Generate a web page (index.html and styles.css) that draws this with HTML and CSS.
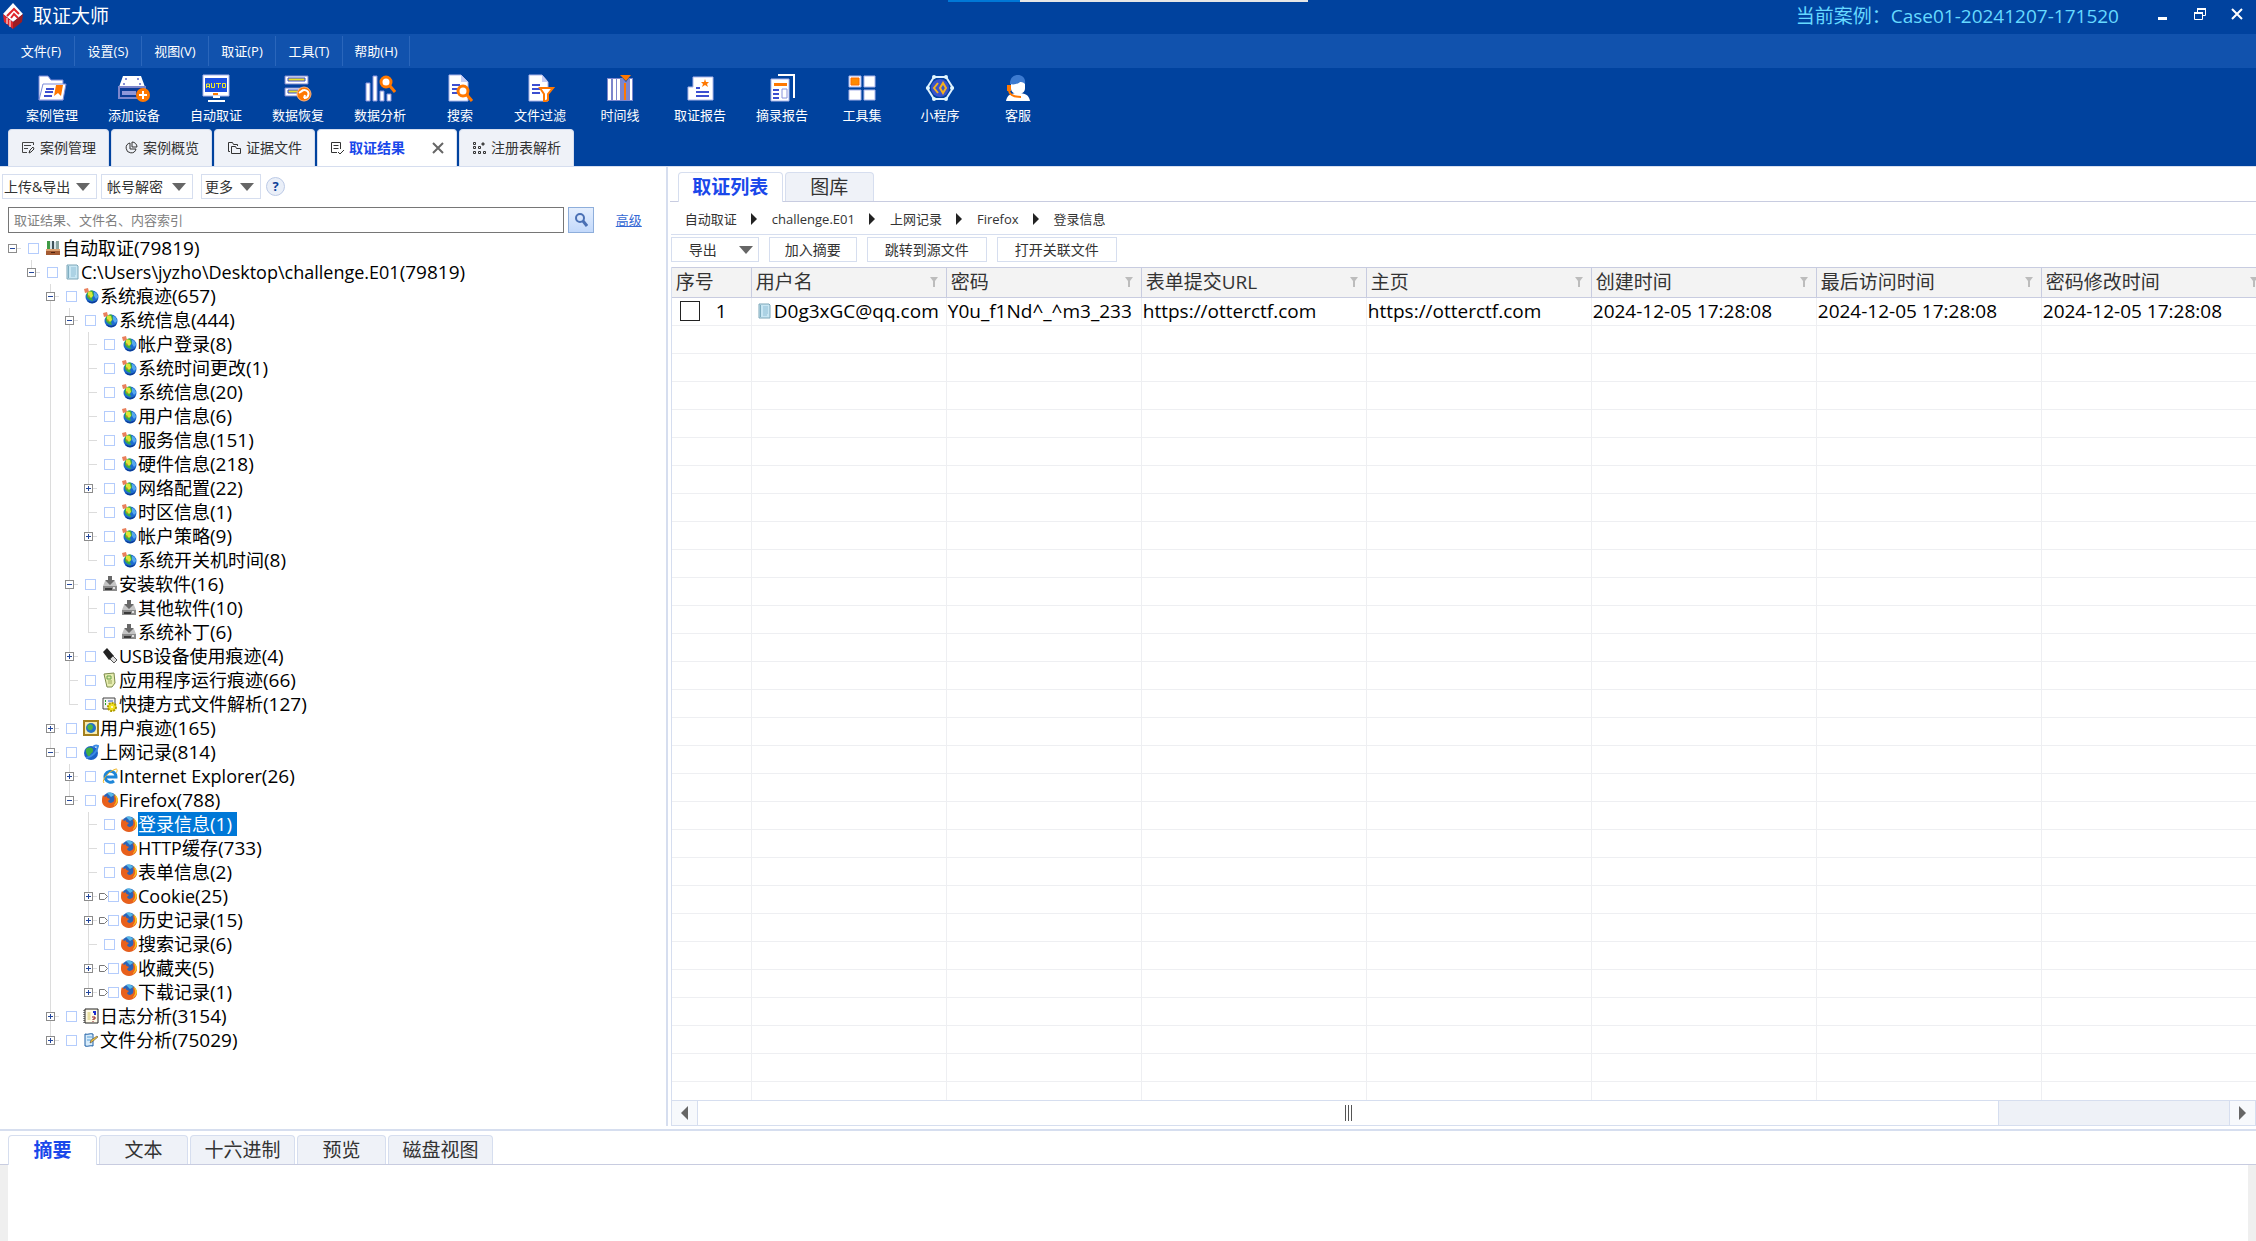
FILE: index.html
```html
<!DOCTYPE html>
<html lang="zh-CN">
<head>
<meta charset="utf-8">
<title>取证大师</title>
<link rel="stylesheet" href="styles.css">
</head>
<body>
<svg class="sprite" aria-hidden="true">
  <symbol id="i-logo" viewBox="0 0 20 26"><path d="M10 0l10 11-10 8L0 11z" fill="#fff"/><path d="M0 11l10 8v7L1 19z" fill="#e0262b"/><path d="M20 11l-10 8v7l9-7z" fill="#9d1c22"/><path d="M4 13l7-7 5 5M8 15l3-4 4 4" fill="none" stroke="#e0262b" stroke-width="2"/><path d="M4 15v6M7 17v7" stroke="#fff"/></symbol>
  <symbol id="t-case" viewBox="0 0 28 28"><path d="M1 2h9l3 4h12v20H1z" fill="#fff" stroke="#7a8ad8"/><path d="M5 10h23l-3 16H1z" fill="#fff" stroke="#7a8ad8"/><path d="M8 15h8M7 18h8M6 22h8" stroke="#3c4fd0" stroke-width="2"/><path d="M18 11h7l-2 11-3-3-4 3z" fill="#ff7800"/></symbol>
  <symbol id="t-add" viewBox="0 0 32 28"><path d="M5 2h18l4 11H1z" fill="#fff"/><path d="M1 13h26v11H1z" fill="#0d3c97" stroke="#7c86cc" stroke-width="2"/><path d="M4 17h14v4H4z" fill="#8f97da"/><g fill="#5c68c8"><circle cx="8" cy="5" r="1"/><circle cx="20" cy="5" r="1"/><circle cx="6" cy="10" r="1"/><circle cx="22" cy="10" r="1"/></g><circle cx="25" cy="21" r="7" fill="#ff7800"/><path d="M25 17v8M21 21h8" stroke="#fff" stroke-width="2"/></symbol>
  <symbol id="t-auto" viewBox="0 0 28 28"><path d="M1 1h26v21H1z" fill="#fff" stroke="#a9b4ea"/><path d="M3 4h22v14H3z" fill="#1c50e0"/><path d="M4.500 14v-4h3v4M5 12.500h3M9.500 9v4.500h3V9M14 9.500h5M16.500 10v4M20.500 9.500h3v4h-3z" fill="none" stroke="#f2ea22"/><path d="M11 19h5v2h-5z" fill="#ff7800"/><path d="M11 23h7M6 27h17" stroke="#fff" stroke-width="2"/></symbol>
  <symbol id="t-recover" viewBox="0 0 28 28"><path d="M1 2h23v8H1zM1 14h23v8H1z" fill="#fff" stroke="#7c86cc"/><path d="M4 4h17v3H4zM4 16h10v3H4z" fill="#e9e02a" stroke="#3c4fd0"/><circle cx="20" cy="20" r="7" fill="#ff7800" stroke="#ffb37a"/><path d="M17 18a4 4 0 1 1 3 6M20 24l1-3M15 19l4-3" fill="none" stroke="#fff" stroke-width="2"/></symbol>
  <symbol id="t-analyse" viewBox="0 0 30 28"><path d="M1 9h4v18H1zM8 2h4v25H8zM15 17h4v10h-4zM22 20h4v7h-4z" fill="#fff" stroke="#8a94dc"/><circle cx="21" cy="8" r="5" fill="#fff" stroke="#ff7800" stroke-width="3"/><path d="M25 12l5 6" stroke="#ff7800" stroke-width="3"/></symbol>
  <symbol id="t-search" viewBox="0 0 26 28"><path d="M2 1h12l7 7v19H2z" fill="#fff" stroke="#a9b4ea"/><path d="M14 1v7h7z" fill="#c4ccf5"/><path d="M5 11h8M5 15h6M5 19h6" stroke="#3c4fd0" stroke-width="2"/><circle cx="16" cy="17" r="5" fill="#fff" stroke="#ff7800" stroke-width="3"/><path d="M20 21l5 6" stroke="#ff7800" stroke-width="3"/></symbol>
  <symbol id="t-filter" viewBox="0 0 28 28"><path d="M3 1h13l6 7v19H3z" fill="#fff" stroke="#a9b4ea"/><path d="M16 1v7h6z" fill="#c4ccf5"/><path d="M6 11h8M6 15h8M6 19h8" stroke="#3c4fd0" stroke-width="2"/><path d="M14 14h13l-5 6v6l-4 2v-8z" fill="#fff" stroke="#ff7800" stroke-width="2"/></symbol>
  <symbol id="t-time" viewBox="0 0 28 28"><path d="M1 4h26v23H1z" fill="#7c86cc"/><path d="M2 5h3v21H2zM7 5h3v21H7zM11 5h3v21h-3zM24 5h2v21h-2z" fill="#fff"/><path d="M13 0h13l-6 8z" fill="#00429e"/><path d="M14 1h11l-5 6z" fill="#ff7800"/><path d="M19 9v17" stroke="#ff7800" stroke-width="2"/></symbol>
  <symbol id="t-report" viewBox="0 0 28 28"><path d="M7 3h20v23H2V13h5z" fill="#fff" stroke="#a9b4ea"/><path d="M10 14h4M10 18h13M10 22h13" stroke="#3c4fd0" stroke-width="2"/><path d="M19 5l1 3h3l-2 2 1 3-3-2-3 2 1-3-2-2h3z" fill="#ff7800"/></symbol>
  <symbol id="t-excerpt" viewBox="0 0 28 28"><path d="M10 1h16v23" fill="none" stroke="#fff" stroke-width="2"/><path d="M3 5h18v22H3z" fill="#fff" stroke="#a9b4ea"/><path d="M6 9h13v3H6z" fill="#ff7800"/><path d="M5 16h6M5 20h6M5 24h6" stroke="#3c4fd0" stroke-width="2"/><path d="M14 15h5v9h-5z" fill="#fff" stroke="#8a94dc"/></symbol>
  <symbol id="t-tools" viewBox="0 0 28 28"><path d="M1 2h12v11H1zM16 2h11v11H16zM1 16h12v10H1zM16 16h11v10H16z" fill="#fff" stroke="#a9b4ea"/><path d="M3 4h8v7H3z" fill="#ff8a00" stroke="#ff6a00"/></symbol>
  <symbol id="t-mini" viewBox="0 0 28 28"><path d="M8 3h12l7 11-7 11H8L1 14z" fill="#00429e" stroke="#dff2ff" stroke-width="2"/><circle cx="14" cy="14" r="9" fill="#3a53cc"/><g fill="#dff6ff"><circle cx="8" cy="3" r="2"/><circle cx="20" cy="3" r="2"/><circle cx="26" cy="14" r="2"/><circle cx="20" cy="25" r="2"/><circle cx="8" cy="25" r="2"/><circle cx="2" cy="14" r="2"/></g><path d="M12 9l-4 5 4 5M17 9l-3 5 3 5 3-5z" fill="none" stroke="#f7b21a" stroke-width="2"/></symbol>
  <symbol id="t-service" viewBox="0 0 28 28"><path d="M2 27c1-6 5-8 12-8s11 2 12 8z" fill="#fff"/><path d="M7 8h14v6c0 4-3 6-7 6s-7-2-7-6z" fill="#fff"/><path d="M6 10C6 3 10 1 14 1s8 3 7 9c-2-2-4-2-5-2-2 2-6 3-10 2z" fill="#3c7ad0"/><path d="M3 11h4v6H3z" fill="#ff7800"/><path d="M5 17c1 4 5 6 12 6" fill="none" stroke="#ff7800" stroke-width="2"/></symbol>
  <symbol id="n-edit" viewBox="0 0 14 14"><path d="M12.500 4V1.500h-11v10H6M3 4.500h7M3 7.500h4" fill="none" stroke="#444"/><path d="M8 12l1-3 3-3 1 2-3 3z" fill="none" stroke="#333"/></symbol>
  <symbol id="n-pie" viewBox="0 0 14 14"><path d="M6 2a5 5 0 1 0 6 6H6z" fill="none" stroke="#333"/><path d="M8 1v5h5a5 5 0 0 0-5-5z" fill="none" stroke="#333"/></symbol>
  <symbol id="n-files" viewBox="0 0 14 14"><path d="M3 10.500H1.500v-9h4l1 2h4V5" fill="none" stroke="#333"/><path d="M4.500 12.500v-7h4l1 2h4v5z" fill="none" stroke="#333"/></symbol>
  <symbol id="n-result" viewBox="0 0 14 14"><path d="M10.500 8V1.500h-9v10H7M3.500 4.500h5M3.500 7.500h5M8 11l2 2 4-4" fill="none" stroke="#333"/></symbol>
  <symbol id="n-reg" viewBox="0 0 14 14"><path d="M1.500 1.500h2v2h-2zM1.500 5.500h2v2h-2zM6.500 5.500h2v2h-2zM1.500 10.500h2v2h-2zM6.500 10.500h2v2h-2zM11.500 10.500h2v2h-2z" fill="none" stroke="#333"/><path d="M11 1l2 2-2 2-2-2z" fill="#444"/></symbol>
  <symbol id="e-root" viewBox="0 0 16 16"><path d="M2 1h3v9H2z" fill="#3f9a46"/><path d="M5 1h2v9H5z" fill="#d7e4e9"/><path d="M7 1h2v9H7z" fill="#40525a"/><path d="M9 2h2v8H9z" fill="#d7e4e9"/><path d="M11 1h3v9h-3z" fill="#8aa4a0"/><path d="M1 9h14v6H1z" fill="#a35a32"/><path d="M1 9h14v2H1z" fill="#dba273"/><path d="M6 12h4v1H6z" fill="#4e220f"/></symbol>
  <symbol id="e-doc" viewBox="0 0 16 16"><path d="M3 1h10l1 1v13H3z" fill="#c8e6f3" stroke="#7da6b8"/><path d="M4 2h1v12H4z" fill="#80aec1"/><path d="M7 4h5M7 6h5M7 8h5M7 10h5M7 12h4" stroke="#6ba6c2" stroke-width=".6"/></symbol>
  <symbol id="e-sys" viewBox="0 0 16 16"><circle cx="9" cy="9" r="6.500" fill="#1e6cd0"/><path d="M4 5c1-2 4-3 6-2l1 4-2 3 1 3-3-1c-3-2-4-4-3-7z" fill="#3fb23c"/><path d="M11 4c2 0 4 3 4 5l-2 2-2-3z" fill="#57a8ee"/><path d="M5 3l4 1 1 4-2 2-3-3z" fill="#d8e838"/><path d="M1 1l4-1 1 4-4 1z" fill="#e9805c"/><path d="M5 7l2 1-1 2z" fill="#f08020"/><path d="M15 11a6 6 0 0 1-11 1c4 3 8 2 11-1z" fill="#0d3c94"/></symbol>
  <symbol id="e-inst" viewBox="0 0 16 16"><path d="M3 5h10l2 5H1z" fill="#c4c4c4"/><path d="M1 10h14v5H1z" fill="#8c8c8c"/><path d="M3 12h7v2H3z" fill="#3a3a3a"/><path d="M6 0h4v4h3L8 9 3 4h3z" fill="#686868"/><circle cx="12" cy="12" r="1" fill="#fff"/></symbol>
  <symbol id="e-usb" viewBox="0 0 16 16"><path d="M5 0l7 8-5 4-6-8z" fill="#222"/><path d="M11 8l4 4-3 3-4-4z" fill="#ddd" stroke="#555"/></symbol>
  <symbol id="e-app" viewBox="0 0 16 16"><path d="M2 2l10-1 1 10-3 4H5z" fill="#e7edb0" stroke="#7c8a4c"/><path d="M5 4h4v3H5z" fill="none" stroke="#67a04a"/><path d="M6 9h4M6 11h4" stroke="#9aa85c"/></symbol>
  <symbol id="e-link" viewBox="0 0 16 16"><path d="M1 2h12v11H1z" fill="#f4f4f4" stroke="#444"/><path d="M3 5h1M3 8h1" stroke="#26a026" stroke-width="2"/><path d="M6 5h5" stroke="#2b58c0"/><circle cx="10" cy="11" r="4" fill="#f1e020"/><circle cx="10" cy="11" r="4" fill="none" stroke="#b09c00" stroke-width="2" stroke-dasharray="2 1"/><circle cx="10" cy="11" r="1" fill="#fff"/></symbol>
  <symbol id="e-user" viewBox="0 0 16 16"><path d="M1 1h14v14H1z" fill="#f8ecae" stroke="#a4801c" stroke-width="2"/><circle cx="8" cy="8" r="5" fill="#2370c8"/><path d="M5 5c3-2 5 0 5 2s-2 4-4 3-2-3-1-5z" fill="#4cb548"/></symbol>
  <symbol id="e-net" viewBox="0 0 16 16"><circle cx="8" cy="9" r="7" fill="#1c62c8"/><path d="M3 5c4-3 8-1 7 2s-3 2-3 5-5-2-4-7z" fill="#3fae45"/><path d="M3 14C9 13 14 8 15 2c-2-1-4 0-5 1" fill="none" stroke="#3b8be4" stroke-width="2"/></symbol>
  <symbol id="e-ie" viewBox="0 0 16 16"><path d="M4 9h10A5.500 5.500 0 1 0 12 13" fill="none" stroke="#1e86d8" stroke-width="3"/><path d="M2 15C-1 12 7 3 14 1c2 0 1 3 0 4" fill="none" stroke="#efb41e"/></symbol>
  <symbol id="e-ff" viewBox="0 0 16 16"><circle cx="8" cy="8" r="7.500" fill="#2b64b8"/><path d="M1 3l2 2 2-1c-1 2 2 2 3 3L6 9c1 3 5 2 6 0 1-3 0-5-1-6 3 1 5 3 5 6 0 4-4 7-8 7s-8-3-8-7c0-2 0-4 1-6z" fill="#e8601c"/><path d="M12 2c3 4 3 9-1 12 3-1 5-4 5-6 0-3-2-5-4-6z" fill="#f9c522"/><path d="M5 1c3-1 6 0 7 2L9 5z" fill="#54b7e8"/></symbol>
  <symbol id="e-log" viewBox="0 0 16 16"><path d="M2 1h13v14H2z" fill="#fffbe8" stroke="#222"/><path d="M1 2v13" stroke="#222" stroke-dasharray="1 1"/><path d="M6 4v8" stroke="#e9dfa0" stroke-width="3"/><path d="M12 3v4M10 4h1" stroke="#1f2fd0" stroke-width="2"/><path d="M9 9h3v2h-2v1M10 13v1" fill="none" stroke="#8d1720"/></symbol>
  <symbol id="e-file" viewBox="0 0 16 16"><path d="M2 2c3 1 5-1 8 0v12c-3-1-5 1-8 0z" fill="#d8ecfa" stroke="#1d5fa6"/><path d="M4 5h5M4 8h4" stroke="#5ba0d8"/><path d="M7 11l1-3 6-4 1 1-6 5z" fill="#f2c23a" stroke="#333" stroke-width=".5"/></symbol>
  <symbol id="e-tag" viewBox="0 0 9 9"><path d="M.5 1.500h5l3 3-3 3h-5z" fill="#fff" stroke="#777"/></symbol>
  <symbol id="g-funnel" viewBox="0 0 8 10"><path d="M0 0h8L5 4v6H3V4z" fill="#bcbcbc"/></symbol>
</svg>

<header class="app-head">
  <div class="titlebar">
    <svg class="logo"><use href="#i-logo"/></svg>
    <h1>取证大师</h1>
    <div class="progress"><span></span></div>
    <p class="current">当前案例：Case01-20241207-171520</p>
    <div class="winbtns">
      <button aria-label="最小化"><svg viewBox="0 0 12 12"><path d="M1 9h9v3H1z" fill="#fff"/></svg></button>
      <button aria-label="还原"><svg viewBox="0 0 12 12"><path d="M3.500 4V.5h8v7H9" fill="none" stroke="#fff"/><path d="M3 1h9M0 5h9" stroke="#fff" stroke-width="2"/><path d="M.5 4.500h8v7h-8z" fill="none" stroke="#fff"/></svg></button>
      <button aria-label="关闭"><svg viewBox="0 0 12 12"><path d="M1 1l10 10M11 1L1 11" stroke="#fff" stroke-width="2"/></svg></button>
    </div>
  </div>
  <nav class="menubar">
    <button>文件(F)</button><button>设置(S)</button><button>视图(V)</button><button>取证(P)</button><button>工具(T)</button><button>帮助(H)</button>
  </nav>
  <div class="toolbar">
    <button><svg><use href="#t-case"/></svg>案例管理</button>
    <button><svg><use href="#t-add"/></svg>添加设备</button>
    <button><svg><use href="#t-auto"/></svg>自动取证</button>
    <button><svg><use href="#t-recover"/></svg>数据恢复</button>
    <button><svg><use href="#t-analyse"/></svg>数据分析</button>
    <button><svg><use href="#t-search"/></svg>搜索</button>
    <button><svg><use href="#t-filter"/></svg>文件过滤</button>
    <button><svg><use href="#t-time"/></svg>时间线</button>
    <button><svg><use href="#t-report"/></svg>取证报告</button>
    <button><svg><use href="#t-excerpt"/></svg>摘录报告</button>
    <button><svg><use href="#t-tools"/></svg>工具集</button>
    <button><svg><use href="#t-mini"/></svg>小程序</button>
    <button><svg><use href="#t-service"/></svg>客服</button>
  </div>
  <div class="pagetabs">
    <button><svg><use href="#n-edit"/></svg>案例管理</button>
    <button><svg><use href="#n-pie"/></svg>案例概览</button>
    <button><svg><use href="#n-files"/></svg>证据文件</button>
    <button class="active"><svg><use href="#n-result"/></svg>取证结果<svg class="close" viewBox="0 0 12 12"><path d="M1 1l10 10M11 1L1 11" stroke="#666" stroke-width="2"/></svg></button>
    <button><svg><use href="#n-reg"/></svg>注册表解析</button>
  </div>
</header>

<main class="work">
  <aside class="side">
    <div class="sidebar-tools">
      <button class="drop d-up">上传&amp;导出<i></i></button>
      <button class="drop d-acc">帐号解密<i></i></button>
      <button class="drop d-more">更多<i></i></button>
      <button class="help">?</button>
    </div>
    <div class="searchrow">
      <input type="text" aria-label="搜索" placeholder="取证结果、文件名、内容索引">
      <button aria-label="搜索"><svg viewBox="0 0 14 14"><circle cx="6" cy="5" r="4" fill="none" stroke="#4a70b4" stroke-width="2"/><path d="M9 8l4 5" stroke="#4a70b4" stroke-width="3"/></svg></button>
      <a href="#">高级</a>
    </div>
    <ul class="tree">
      <li><div class="row root"><button class="tg minus" aria-label="折叠"></button><label><input type="checkbox"><svg><use href="#e-root"/></svg><span>自动取证<b>(79819)</b></span></label></div>
      <ul>
        <li><div class="row"><button class="tg minus" aria-label="折叠"></button><label><input type="checkbox"><svg><use href="#e-doc"/></svg><span>C:\Users\jyzho\Desktop\challenge.E01<b>(79819)</b></span></label></div>
        <ul>
          <li><div class="row"><button class="tg minus" aria-label="折叠"></button><label><input type="checkbox"><svg><use href="#e-sys"/></svg><span>系统痕迹<b>(657)</b></span></label></div>
          <ul>
            <li><div class="row"><button class="tg minus" aria-label="折叠"></button><label><input type="checkbox"><svg><use href="#e-sys"/></svg><span>系统信息<b>(444)</b></span></label></div>
            <ul>
              <li><div class="row leaf"><label><input type="checkbox"><svg><use href="#e-sys"/></svg><span>帐户登录<b>(8)</b></span></label></div></li>
              <li><div class="row leaf"><label><input type="checkbox"><svg><use href="#e-sys"/></svg><span>系统时间更改<b>(1)</b></span></label></div></li>
              <li><div class="row leaf"><label><input type="checkbox"><svg><use href="#e-sys"/></svg><span>系统信息<b>(20)</b></span></label></div></li>
              <li><div class="row leaf"><label><input type="checkbox"><svg><use href="#e-sys"/></svg><span>用户信息<b>(6)</b></span></label></div></li>
              <li><div class="row leaf"><label><input type="checkbox"><svg><use href="#e-sys"/></svg><span>服务信息<b>(151)</b></span></label></div></li>
              <li><div class="row leaf"><label><input type="checkbox"><svg><use href="#e-sys"/></svg><span>硬件信息<b>(218)</b></span></label></div></li>
              <li><div class="row"><button class="tg plus" aria-label="展开"></button><label><input type="checkbox"><svg><use href="#e-sys"/></svg><span>网络配置<b>(22)</b></span></label></div></li>
              <li><div class="row leaf"><label><input type="checkbox"><svg><use href="#e-sys"/></svg><span>时区信息<b>(1)</b></span></label></div></li>
              <li><div class="row"><button class="tg plus" aria-label="展开"></button><label><input type="checkbox"><svg><use href="#e-sys"/></svg><span>帐户策略<b>(9)</b></span></label></div></li>
              <li><div class="row leaf"><label><input type="checkbox"><svg><use href="#e-sys"/></svg><span>系统开关机时间<b>(8)</b></span></label></div></li>
            </ul></li>
            <li><div class="row"><button class="tg minus" aria-label="折叠"></button><label><input type="checkbox"><svg><use href="#e-inst"/></svg><span>安装软件<b>(16)</b></span></label></div>
            <ul>
              <li><div class="row leaf"><label><input type="checkbox"><svg><use href="#e-inst"/></svg><span>其他软件<b>(10)</b></span></label></div></li>
              <li><div class="row leaf"><label><input type="checkbox"><svg><use href="#e-inst"/></svg><span>系统补丁<b>(6)</b></span></label></div></li>
            </ul></li>
            <li><div class="row"><button class="tg plus" aria-label="展开"></button><label><input type="checkbox"><svg><use href="#e-usb"/></svg><span>USB设备使用痕迹<b>(4)</b></span></label></div></li>
            <li><div class="row leaf"><label><input type="checkbox"><svg><use href="#e-app"/></svg><span>应用程序运行痕迹<b>(66)</b></span></label></div></li>
            <li><div class="row leaf"><label><input type="checkbox"><svg><use href="#e-link"/></svg><span>快捷方式文件解析<b>(127)</b></span></label></div></li>
          </ul></li>
          <li><div class="row"><button class="tg plus" aria-label="展开"></button><label><input type="checkbox"><svg><use href="#e-user"/></svg><span>用户痕迹<b>(165)</b></span></label></div></li>
          <li><div class="row"><button class="tg minus" aria-label="折叠"></button><label><input type="checkbox"><svg><use href="#e-net"/></svg><span>上网记录<b>(814)</b></span></label></div>
          <ul>
            <li><div class="row"><button class="tg plus" aria-label="展开"></button><label><input type="checkbox"><svg><use href="#e-ie"/></svg><span>Internet Explorer<b>(26)</b></span></label></div></li>
            <li><div class="row"><button class="tg minus" aria-label="折叠"></button><label><input type="checkbox"><svg><use href="#e-ff"/></svg><span>Firefox<b>(788)</b></span></label></div>
            <ul>
              <li><div class="row leaf"><label><input type="checkbox"><svg><use href="#e-ff"/></svg><span class="sel">登录信息<b>(1)</b></span></label></div></li>
              <li><div class="row leaf"><label><input type="checkbox"><svg><use href="#e-ff"/></svg><span>HTTP缓存<b>(733)</b></span></label></div></li>
              <li><div class="row leaf"><label><input type="checkbox"><svg><use href="#e-ff"/></svg><span>表单信息<b>(2)</b></span></label></div></li>
              <li><div class="row tagged"><button class="tg plus" aria-label="展开"></button><svg class="tag"><use href="#e-tag"/></svg><label><input type="checkbox"><svg><use href="#e-ff"/></svg><span>Cookie<b>(25)</b></span></label></div></li>
              <li><div class="row tagged"><button class="tg plus" aria-label="展开"></button><svg class="tag"><use href="#e-tag"/></svg><label><input type="checkbox"><svg><use href="#e-ff"/></svg><span>历史记录<b>(15)</b></span></label></div></li>
              <li><div class="row leaf"><label><input type="checkbox"><svg><use href="#e-ff"/></svg><span>搜索记录<b>(6)</b></span></label></div></li>
              <li><div class="row tagged"><button class="tg plus" aria-label="展开"></button><svg class="tag"><use href="#e-tag"/></svg><label><input type="checkbox"><svg><use href="#e-ff"/></svg><span>收藏夹<b>(5)</b></span></label></div></li>
              <li><div class="row tagged"><button class="tg plus" aria-label="展开"></button><svg class="tag"><use href="#e-tag"/></svg><label><input type="checkbox"><svg><use href="#e-ff"/></svg><span>下载记录<b>(1)</b></span></label></div></li>
            </ul></li>
          </ul></li>
          <li><div class="row"><button class="tg plus" aria-label="展开"></button><label><input type="checkbox"><svg><use href="#e-log"/></svg><span>日志分析<b>(3154)</b></span></label></div></li>
          <li><div class="row"><button class="tg plus" aria-label="展开"></button><label><input type="checkbox"><svg><use href="#e-file"/></svg><span>文件分析<b>(75029)</b></span></label></div></li>
        </ul></li>
      </ul></li>
    </ul>
  </aside>

  <section class="results">
    <div class="tabs list-tabs"><button class="active">取证列表</button><button>图库</button></div>
    <nav class="crumbs">
      <a href="#">自动取证</a><i></i><a href="#">challenge.E01</a><i></i><a href="#">上网记录</a><i></i><a href="#">Firefox</a><i></i><a href="#">登录信息</a>
    </nav>
    <div class="actions">
      <button class="drop">导出<i></i></button><button>加入摘要</button><button class="wide">跳转到源文件</button><button class="wide">打开关联文件</button>
    </div>
    <div class="grid">
      <table>
        <colgroup><col class="c-no"><col class="c-mid"><col class="c-mid"><col class="c-long"><col class="c-long"><col class="c-long"><col class="c-long"><col class="c-long"></colgroup>
        <thead><tr>
          <th>序号</th>
          <th><div>用户名<svg><use href="#g-funnel"/></svg></div></th>
          <th><div>密码<svg><use href="#g-funnel"/></svg></div></th>
          <th><div>表单提交URL<svg><use href="#g-funnel"/></svg></div></th>
          <th><div>主页<svg><use href="#g-funnel"/></svg></div></th>
          <th><div>创建时间<svg><use href="#g-funnel"/></svg></div></th>
          <th><div>最后访问时间<svg><use href="#g-funnel"/></svg></div></th>
          <th><div>密码修改时间<svg><use href="#g-funnel"/></svg></div></th>
        </tr></thead>
        <tbody>
          <tr><td class="no"><label><input type="checkbox">1</label></td><td><div class="acct"><svg><use href="#e-doc"/></svg>D0g3xGC@qq.com</div></td><td>Y0u_f1Nd^_^m3_233</td><td>https://otterctf.com</td><td>https://otterctf.com</td><td>2024-12-05 17:28:08</td><td>2024-12-05 17:28:08</td><td>2024-12-05 17:28:08</td></tr>
          <tr class="fill"><td></td><td></td><td></td><td></td><td></td><td></td><td></td><td></td></tr>
        </tbody>
      </table>
    </div>
    <div class="hscroll">
      <button class="left" aria-label="向左"><i></i></button>
      <div class="thumb"><span></span></div>
      <div class="track"></div>
      <button class="right" aria-label="向右"><i></i></button>
    </div>
  </section>
</main>

<section class="detail">
  <div class="tabs detail-tabs"><button class="active">摘要</button><button>文本</button><button class="long">十六进制</button><button>预览</button><button class="long">磁盘视图</button></div>
  <div class="detail-body"></div>
</section>
</body>
</html>
```

FILE: styles.css
```css
* { box-sizing: border-box; }
html, body { height: 100%; }
body {
  margin: 0;
  display: flex;
  flex-direction: column;
  background: #fff;
  color: #333;
  font-family: "Open Sans", "Noto Sans CJK SC", sans-serif;
  font-size: 14px;
  line-height: 20px;
  overflow: hidden;
}
button { margin: 0; padding: 0; border: 0; background: none; color: inherit; font: inherit; white-space: nowrap; }
ul { margin: 0; padding: 0; list-style: none; }
svg { display: block; flex: none; }
.sprite { position: absolute; width: 0; height: 0; }

/* header */
.app-head { flex: none; background: #00429e; color: #fff; border-bottom: 1px solid #d6deef; }
.titlebar { display: flex; height: 34px; padding: 0 0 2px 3px; align-items: center; }
.logo { width: 20px; height: 26px; }
.titlebar h1 { margin: 0 0 0 10px; flex: 1; font-size: 19px; font-weight: 400; line-height: 26px; }
.progress { align-self: flex-start; position: absolute; left: 42%; width: 16%; height: 2px; background: #e6e6e6; }
.progress span { display: block; width: 20%; height: 2px; background: #0078d7; }
.current { margin: 0; color: #66d9ff; font-size: 19px; line-height: 26px; }
.winbtns { display: flex; gap: 25px; margin: 0 13px 4px 38px; }
.winbtns button { width: 12px; height: 12px; }
.winbtns svg { width: 12px; height: 12px; }

.menubar { display: flex; height: 34px; padding: 2px 0 2px 8px; background: #1152ad; font-size: 13px; }
.menubar button { width: 67px; border-right: 1px solid #2a66bb; }

.toolbar { display: flex; height: 61px; padding: 6px 11px 0; font-size: 13px; }
.toolbar button { display: flex; flex-direction: column; align-items: center; gap: 3px; min-width: 78px; padding: 0 15px; }
.toolbar svg { width: 32px; height: 28px; }

.pagetabs { display: flex; gap: 2px; height: 37px; padding-left: 8px; }
.pagetabs button {
  display: flex; align-items: center; gap: 5px; padding: 0 12px;
  background: #eff2f8; color: #333;
  border: 1px solid #d6deef; border-bottom: 0; border-radius: 4px 4px 0 0;
}
.pagetabs svg { width: 14px; height: 14px; }
.pagetabs .active { background: #fff; color: #1a48ea; font-weight: 700; }
.pagetabs .close { width: 12px; height: 12px; margin-left: 22px; }

/* workspace */
.work { flex: 1; min-height: 0; display: flex; padding-bottom: 3px; }
.side { width: 29.6%; padding-top: 7px; border-right: 2px solid #d6deef; overflow: hidden; }
.drop i { width: 0; height: 0; border: 7px solid transparent; border-top: 8px solid #666; border-bottom: 0; }
.sidebar-tools { display: flex; align-items: center; height: 25px; padding-left: 2px; }
.sidebar-tools .drop { display: flex; align-items: center; justify-content: space-between; height: 25px; border: 1px solid #d6deef; }
.sidebar-tools .d-up { width: 95px; padding: 0 6px 0 1px; margin-right: 4px; }
.sidebar-tools .d-acc { width: 92px; padding: 0 6px 0 5px; margin-right: 8px; }
.sidebar-tools .d-more { width: 60px; padding: 0 6px 0 3px; margin-right: 5px; }
.help { width: 19px; height: 19px; border: 1px solid #bccae6; border-radius: 50%; background: #eaeff8; color: #0d3f98; font-size: 13px; font-weight: 700; line-height: 17px; }
.searchrow { display: flex; align-items: center; margin: 7px 24px 3px 8px; height: 27px; }
.searchrow input { flex: 1; min-width: 0; height: 26px; padding: 0 5px; border: 1px solid #767676; background: #fff; font: inherit; font-size: 13px; }
.searchrow input::placeholder { color: #808080; }
.searchrow button { display: grid; place-items: center; width: 26px; height: 26px; margin: 0 22px 0 4px; border: 1px solid #8eaedb; background: linear-gradient(#e4eefd, #c3d9fb); }
.searchrow svg { width: 14px; height: 14px; }
.searchrow a { color: #3568d4; font-size: 13px; }

.tree { color: #000; font-size: 18px; line-height: 24px; }
.tree ul { margin-left: 19px; }
.tree ul > li { background: linear-gradient(#dcdcdc, #dcdcdc) 12px 0 / 1px 100% no-repeat; }
.tree ul > li:last-child { background-size: 1px 12px; }
.row { display: flex; align-items: center; height: 24px; padding-left: 8px; background: linear-gradient(#dcdcdc, #dcdcdc) 12px 12px / 9px 1px no-repeat; }
.row label { display: flex; align-items: center; margin-left: 11px; }
.row.leaf label { margin-left: 20px; }
.row.tagged label { margin-left: 0; }
.tag { width: 9px; height: 9px; margin-left: 6px; }
.tg { width: 9px; height: 9px; border: 1px solid #8c8c8c; background: linear-gradient(#24479c, #24479c) center / 5px 1px no-repeat, #fff; }
.tg.plus { background: linear-gradient(#24479c, #24479c) center / 5px 1px no-repeat, linear-gradient(#24479c, #24479c) center / 1px 5px no-repeat, #fff; }
.row input { appearance: none; width: 11px; height: 11px; margin: 0 6px 0 0; border: 1px solid #b4ccfc; background: #fff; }
.row.tagged input { margin-right: 2px; }
.row label svg { width: 16px; height: 16px; margin-right: 1px; }
.row span { height: 24px; white-space: nowrap; }
.row b { font-size: 19px; font-weight: 400; line-height: 24px; }
.row .sel { padding-right: 5px; background: #0078d7; color: #fff; }

/* tab strips */
.tabs { display: flex; gap: 2px; padding-left: 8px; font-size: 19px; border-bottom: 1px solid #c8cce0; }
.tabs button { width: 89px; height: 29px; border: 1px solid #d6deef; border-bottom: 0; border-radius: 4px 4px 0 0; background: #eff2f8; line-height: 26px; }
.tabs .active { height: 30px; margin-bottom: -1px; padding-bottom: 1px; background: #fff; color: #1a48ea; font-weight: 700; }
.tabs .long { width: 105px; }

.results { flex: 1; min-width: 0; display: flex; flex-direction: column; padding: 5px 0 0 3px; }
.list-tabs { margin-left: -1px; }
.list-tabs .active { width: 105px; }
.crumbs { display: flex; align-items: center; height: 33px; padding: 2px 0 0 14px; border-bottom: 1px solid #d6deef; font-size: 13px; }
.crumbs a { color: #333; text-decoration: none; }
.crumbs i { margin: 0 15px 0 14px; border: 6px solid transparent; border-left-color: #222; border-right: 0; }
.actions { display: flex; gap: 10px; padding: 2px 0 5px; }
.actions button { width: 88px; height: 25px; border: 1px solid #d6deef; }
.actions .wide { width: 120px; }
.actions .drop { display: flex; align-items: center; justify-content: space-between; padding: 0 5px 0 17px; }

.grid { flex: 1; min-height: 0; overflow: hidden; border-left: 1px solid #d6deef; }
table { width: 1595px; table-layout: fixed; border-collapse: separate; border-spacing: 0; font-size: 19px; line-height: 26px; }
.c-no { width: 80px; }
.c-mid { width: 195px; }
.c-long { width: 225px; }
th { height: 31px; padding: 0 8px 2px 4px; border: solid #c8cce0; border-width: 1px 1px 1px 0; background: #f3f3f3; font-weight: 400; text-align: left; white-space: nowrap; }
th div { display: flex; align-items: center; justify-content: space-between; }
th svg { width: 8px; height: 10px; }
td { height: 28px; padding: 0 0 1px 1px; border: solid #eeeff2; border-width: 0 1px 1px 0; color: #000; white-space: nowrap; }
.no label { display: flex; align-items: center; gap: 16px; padding-left: 7px; }
.no input { appearance: none; width: 20px; height: 20px; margin: 0; border: 1px solid #222; background: #fff; }
.acct { display: flex; align-items: center; gap: 2px; padding-left: 3px; }
.acct svg { width: 16px; height: 18px; }
.fill td { height: 1400px; border-bottom: 0; background: repeating-linear-gradient(#fff 0 27px, #eeeff2 27px 28px); }

.hscroll { display: flex; flex: none; height: 26px; border: 1px solid #d6deef; }
.hscroll button { display: grid; place-items: center; width: 26px; background: #f7f9fc; }
.hscroll i { border: 7px solid transparent; }
.hscroll .left { border-right: 1px solid #d6deef; }
.hscroll .right { border-left: 1px solid #d6deef; }
.hscroll .left i { border-right-color: #666; border-left: 0; }
.hscroll .right i { border-left-color: #666; border-right: 0; }
.thumb { flex: 85; display: grid; place-items: center; border-right: 1px solid #d6deef; background: #fff; }
.thumb span { width: 7px; height: 16px; background: repeating-linear-gradient(90deg, #555 0 1px, #fff 1px 3px); }
.track { flex: 15; background: #eef1f7; }

/* detail */
.detail { flex: none; display: flex; flex-direction: column; min-height: 112px; padding-top: 4px; border-top: 2px solid #d6deef; }
.detail-body { flex: 1; border: solid #efefef; border-width: 0 8px; background: #fff; }
```
